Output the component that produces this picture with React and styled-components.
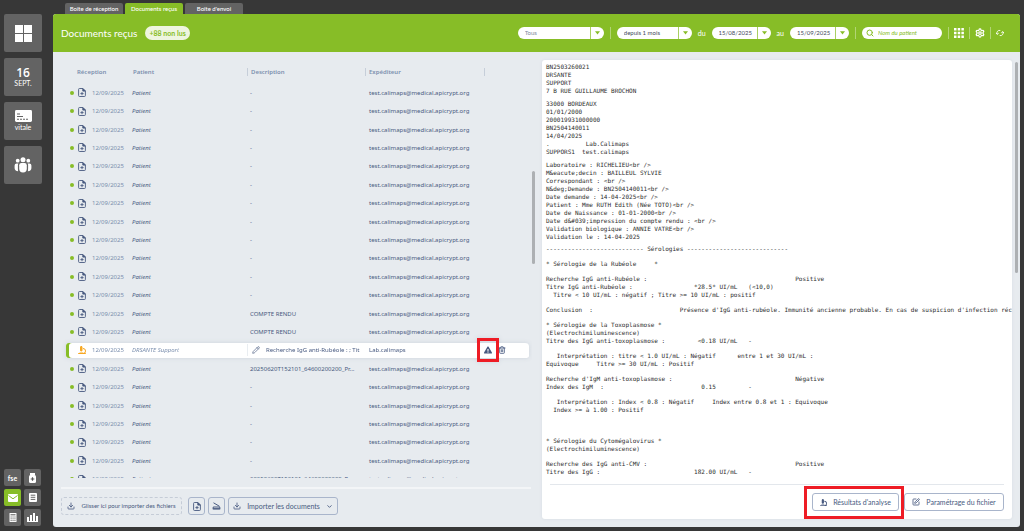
import React from "react";
import styled, { createGlobalStyle, css } from "styled-components";
import { FaMicroscope, FaExclamationTriangle } from "react-icons/fa";
import { Download, Pencil, Trash2, SquarePen, ChevronDown, Search, Settings } from "lucide-react";

const c = {
  dark: "#373737",
  tile: "#636363",
  green: "#87bd27",
  panel: "#e7ebef",
  ink: "#485a80",
  soft: "#7b8fae",
  line: "#a9b5cb",
  red: "#ee1c25",
};

const GlobalStyle = createGlobalStyle`
  *, *::before, *::after { box-sizing: border-box; }
  body { margin: 0; background: ${c.dark}; }
  body, button, input, select { font-family: Lato, "Open Sans", sans-serif; }
  button { cursor: pointer; }
  svg { display: block; flex: none; }
`;

const Page = styled.div`
  display: flex;
  height: 100vh;
  padding-right: 4px;
  overflow: hidden;
  background: ${c.dark};
`;

/* ---------- side bar ---------- */

const Sidebar = styled.nav`
  display: flex;
  flex-direction: column;
  flex: 0 0 53px;
  gap: 6px;
  padding: 14px 0 5px 4px;
`;

const Tile = styled.button`
  display: flex;
  flex-direction: column;
  align-items: center;
  justify-content: center;
  width: 38px;
  height: 38px;
  padding: 0;
  border: 0;
  border-radius: 2px;
  background: ${c.tile};
  color: #fff;
  font-size: 7px;
  line-height: 9px;
`;

const DayNumber = styled.strong`
  font-family: "Open Sans", sans-serif;
  font-size: 12px;
  line-height: 13px;
  font-weight: 600;
`;

const MiniGrid = styled.div`
  display: grid;
  grid-template-columns: repeat(2, 17px);
  gap: 3px;
  margin-top: auto;
`;

const MiniTile = styled.button`
  display: flex;
  align-items: center;
  justify-content: center;
  width: 17px;
  height: 17px;
  padding: 0;
  border: 0;
  border-radius: 2px;
  background: ${(p) => (p.$active ? c.green : c.tile)};
  color: #fff;
  font-size: 7px;
  font-weight: 700;
`;

/* ---------- main window ---------- */

const Main = styled.main`
  display: flex;
  flex-direction: column;
  flex: 1;
  min-width: 0;
  padding: 3px 0 4px;
`;

const Tabs = styled.div`
  display: flex;
  gap: 2px;
  padding-left: 12px;
`;

const Tab = styled.button`
  width: 58px;
  height: 11px;
  padding: 0;
  border: 0;
  border-radius: 2px 2px 0 0;
  background: ${(p) => (p.$active ? c.green : c.tile)};
  color: #fff;
  font-size: 6px;
  line-height: 10px;
  font-weight: 500;
  white-space: nowrap;
`;

const Window = styled.section`
  display: flex;
  flex-direction: column;
  flex: 1;
  min-height: 0;
  overflow: hidden;
  border-radius: 3px;
  background: ${c.panel};
`;

const Header = styled.header`
  display: flex;
  align-items: center;
  flex: 0 0 38px;
  padding: 0 16px 0 8px;
  background: ${c.green};
  color: #fff;
`;

const Title = styled.h1`
  margin: 0;
  font-size: 10px;
  line-height: 16px;
  font-weight: 400;
  white-space: nowrap;
`;

const Badge = styled.span`
  margin-left: 8px;
  padding: 0 4px;
  border-radius: 7px;
  background: #eef5df;
  color: ${c.green};
  font-size: 7px;
  line-height: 14px;
  font-weight: 700;
  white-space: nowrap;
`;

const Filters = styled.form`
  display: flex;
  align-items: center;
  gap: 6px;
  margin-left: auto;
`;

const Tools = styled.div`
  display: flex;
  align-items: center;
  gap: 5px;
`;

const Separator = styled.span`
  width: 1px;
  height: 12px;
  background: #b2d575;
`;

const Pill = styled.label`
  display: flex;
  align-items: center;
  width: ${(p) => p.$width};
  height: 12px;
  padding-left: ${(p) => (p.$search ? "4px" : "7px")};
  overflow: hidden;
  border-radius: 6px;
  background: #fff;
  color: ${c.green};
`;

const field = css`
  flex: 1;
  width: 100%;
  min-width: 0;
  height: 12px;
  padding: 0;
  border: 0;
  outline: 0;
  background: transparent;
  color: ${(p) => (p.$muted ? "#7d899c" : "#43495a")};
  font-size: 6px;
  line-height: 12px;
`;

const Select = styled.select`
  ${field}
  appearance: none;
`;

const DateInput = styled.input`
  ${field}
`;

const SearchInput = styled.input`
  ${field}
  padding-left: 4px;
  &::placeholder {
    color: ${c.green};
    opacity: 1;
    font-style: italic;
  }
`;

const Arrow = styled.span`
  display: flex;
  align-items: center;
  justify-content: center;
  flex: 0 0 14px;
  height: 12px;
  border-left: 1px solid #a9d062;
`;

const Word = styled.span`
  font-size: 7px;
  line-height: 12px;
`;

const IconButton = styled.button`
  display: flex;
  padding: 0;
  border: 0;
  background: none;
  color: ${(p) => p.$color || "#fff"};
`;

const Columns = styled.div`
  display: grid;
  grid-template-columns: 485fr 482fr;
  flex: 1;
  min-height: 0;
`;

/* ---------- list of documents ---------- */

const ListPane = styled.section`
  display: flex;
  flex-direction: column;
  min-width: 0;
  min-height: 0;
  padding: 8px 3px 12px 8px;
`;

const ListArea = styled.div`
  display: flex;
  flex: 1;
  min-height: 0;
`;

const TableWrap = styled.div`
  flex: 1;
  min-width: 0;
  overflow: hidden;
  padding: 0 3px 0 5px;
`;

const Rail = styled.div`
  flex: 0 0 3px;
  padding-top: ${(p) => p.$top};
`;

const Thumb = styled.div`
  width: 3px;
  height: ${(p) => p.$height};
  border-radius: 2px;
  background: #adb0b3;
`;

const Table = styled.table`
  width: 100%;
  height: 429px;
  table-layout: fixed;
  border-collapse: separate;
  border-spacing: 0;
  color: ${c.ink};
  font-family: "Noto Sans", "Open Sans", sans-serif;
  font-size: 6px;
  line-height: 12px;
`;

const Th = styled.th`
  height: 24px;
  padding: 0;
  color: ${c.soft};
  text-align: left;
  font-weight: 600;
`;

const HeadLabel = styled.span`
  display: block;
  height: 8px;
  padding-left: 3px;
  border-left: 1px solid ${(p) => (p.$bar ? "#c6ced9" : "transparent")};
  line-height: 8px;
`;

const ReceptionHead = styled(HeadLabel)`
  padding-left: 10px;
`;

const Td = styled.td`
  padding: 0 0 0 ${(p) => p.$left || "0"};
  border-style: solid;
  border-color: transparent;
  border-width: 1px 0 2px;
  overflow: hidden;
  color: ${(p) => (p.$faint ? c.soft : "inherit")};
  font-style: ${(p) => (p.$italic ? "italic" : "normal")};
  text-overflow: ellipsis;
  white-space: nowrap;
`;

const Row = styled.tr`
  ${(p) =>
    p.$selected &&
    css`
      filter: drop-shadow(0 0 2px #cdd4dd);
      ${Td} {
        background: #fff padding-box;
      }
      ${Td}:first-child {
        border-top-left-radius: 3px;
        border-bottom-left-radius: 3px;
        box-shadow: inset 3px 0 0 ${c.green};
      }
      ${Td}:last-child {
        border-top-right-radius: 4px;
        border-bottom-right-radius: 4px;
        overflow: visible;
      }
    `}
`;

const StatusCell = styled.div`
  display: flex;
  align-items: center;
  gap: 4px;
  padding-left: 4px;
`;

const Dot = styled.span`
  width: 4px;
  height: 4px;
  border-radius: 50%;
  background: ${(p) => (p.$on ? c.green : "transparent")};
`;

const EditCell = styled.div`
  display: flex;
  align-items: center;
  gap: 6px;
  padding-left: 4px;
  border-left: 1px solid #e9edf1;
`;

const RowActions = styled.div`
  display: flex;
  align-items: center;
  gap: 6px;
`;

const Marked = styled.div`
  position: relative;
  display: flex;
`;

const Mark = styled.span`
  position: absolute;
  z-index: 1;
  inset: ${(p) => p.$inset};
  border: 3px solid ${c.red};
  pointer-events: none;
`;

const ListFooter = styled.footer`
  display: flex;
  gap: 3px;
  margin: 9px 4px 0 0;
  padding-top: 8px;
  border-top: 2px solid #f3f5f7;
`;

const Button = styled.button`
  display: flex;
  align-items: center;
  justify-content: center;
  gap: 6px;
  height: 18px;
  width: ${(p) => p.$width};
  margin-right: ${(p) => (p.$dashed ? "3px" : "0")};
  padding: 0;
  border: 1px ${(p) => (p.$dashed ? "dashed #c5ccd7" : `solid ${c.line}`)};
  border-radius: 3px;
  background: transparent;
  color: ${c.ink};
  font-size: ${(p) => (p.$dashed ? "6px" : "7px")};
  line-height: 12px;
  white-space: nowrap;
`;

/* ---------- document preview ---------- */

const PreviewPane = styled.section`
  display: flex;
  gap: 3px;
  min-width: 0;
  min-height: 0;
  padding: 8px 2px 8px 4px;
`;

const Card = styled.article`
  display: flex;
  flex-direction: column;
  flex: 1;
  min-width: 0;
  border-radius: 3px;
  background: #fff;
  box-shadow: 0 0 3px #d6dce4;
`;

const Report = styled.div`
  flex: 1;
  min-height: 0;
  overflow: hidden;
  padding: 3px 0 0 4px;
`;

const Paragraph = styled.pre`
  margin: 0 0 ${(p) => p.$after} 0;
  color: #2c2c2c;
  font-family: "DejaVu Sans Mono", "Liberation Mono", monospace;
  font-size: 6px;
  line-height: 8px;
`;

const CardFooter = styled.footer`
  display: flex;
  justify-content: flex-end;
  gap: 5px;
  margin: 0 8px;
  padding: 8px 0;
  border-top: 1px solid #e3e7ec;
`;

/* ---------- drawings ---------- */

const WindowsIcon = () => (
  <svg width="17" height="17" viewBox="0 0 17 17" fill="#fff">
    <path d="M0 0h8v8H0zM9 0h8v8H9zM0 9h8v8H0zM9 9h8v8H9z" />
  </svg>
);

const CardIcon = () => (
  <svg width="17" height="13" viewBox="0 0 17 13">
    <rect width="17" height="12" rx="1.4" fill="#fff" />
    <path d="M2 4h3M2 6.5h6" stroke="#636363" strokeWidth="1.2" />
    <path d="M2 9.2h12" stroke="#636363" strokeWidth="1.1" strokeDasharray="2 1" />
  </svg>
);

const PeopleIcon = () => (
  <svg width="18" height="16" viewBox="0 0 18 16" fill="#fff">
    <circle cx="9" cy="2.8" r="2.5" />
    <circle cx="3.7" cy="3.7" r="1.9" />
    <circle cx="14.3" cy="3.7" r="1.9" />
    <path d="M5.2 8.2Q5.2 6 7.4 6h3.2q2.2 0 2.2 2.2v3.3q0 4-3.8 4t-3.8-4z" />
    <path d="M4.4 6.5H2.6Q.6 6.5.6 8.6v2.5q0 3 3.5 3.2Q3.9 12.5 3.9 11V8.2q0-1 .5-1.7zM13.6 6.5h1.8q2 0 2 2.1v2.5q0 3-3.5 3.2.2-1.8.2-3.3V8.2q0-1-.5-1.7z" />
  </svg>
);

const BottleIcon = () => (
  <svg width="9" height="10" viewBox="0 0 9 10">
    <rect x="2" width="5" height="2" fill="#fff" />
    <rect x="1" y="2" width="7" height="8" rx="1.5" fill="#fff" />
    <path d="M4.500 4.200v3.600M2.700 6h3.600" stroke="#555" strokeWidth="1.200" />
  </svg>
);

const MailIcon = () => (
  <svg width="10" height="8" viewBox="0 0 10 8">
    <rect width="10" height="8" rx="1" fill="#fff" />
    <path d="M.5 1.500 5 4.800 9.500 1.500" fill="none" stroke={c.green} strokeWidth="1" />
  </svg>
);

const SheetIcon = () => (
  <svg width="8" height="9" viewBox="0 0 8 9">
    <rect width="8" height="9" rx="1" fill="#fff" />
    <path d="M1.700 2.200h4.600M1.700 4.300h4.600M1.700 6.400h4.600" stroke="#555" strokeWidth=".9" />
  </svg>
);

const CalculatorIcon = () => (
  <svg width="8" height="9" viewBox="0 0 8 9">
    <rect x=".5" width="7" height="9" rx=".6" fill="#fff" />
    <path d="M1.500 1.800h5" stroke="#555" strokeWidth="1" />
    <path d="M1.600 4h5M1.600 5.800h5M1.600 7.600h5" stroke="#555" strokeWidth=".9" strokeDasharray="1.100 .8" />
  </svg>
);

const ChartIcon = () => (
  <svg width="11" height="9" viewBox="0 0 11 9" fill="#fff">
    <path d="M0 4h2v4H0zM3 2h2v6H3zM6 0h2v8H6zM9 3h2v5H9zM0 8h11v1H0z" />
  </svg>
);

const Caret = () => (
  <svg width="5" height="4" viewBox="0 0 5 4" fill={c.green}>
    <path d="M0 .3h5L2.500 3.600z" />
  </svg>
);

const GridIcon = () => (
  <svg width="10" height="10" viewBox="0 0 10 10" fill="#fff">
    <path d="M0 0h2.500v2.500H0zM3.700 0h2.500v2.500H3.700zM7.400 0h2.500v2.500H7.400zM0 3.700h2.500v2.500H0zM3.700 3.700h2.500v2.500H3.700zM7.400 3.700h2.500v2.500H7.400zM0 7.400h2.500v2.500H0zM3.700 7.400h2.500v2.500H3.700zM7.400 7.400h2.500v2.500H7.400z" />
  </svg>
);

const SyncIcon = () => (
  <svg width="8" height="8" viewBox="0 0 8 8" fill="none" stroke="#fff" strokeWidth=".9">
    <path d="M1.200 5.200A2.600 2.600 0 0 1 4.300 1.500M6.800 2.800A2.600 2.600 0 0 1 3.700 6.500" />
    <path d="M0 3.900l1.200 1.500 1.500-1.200M8 4.100 6.800 2.600 5.300 3.800" />
  </svg>
);

const FileAddIcon = () => (
  <svg width="8" height="9" viewBox="0 0 8 9" fill="none" stroke={c.ink} strokeWidth=".9">
    <path d="M4.900.5H1.500q-.9 0-.9.900v6.200q0 .9.900.900h5q.9 0 .9-.9V3z" />
    <path d="M4.800.6v2.500h2.500z" fill={c.ink} />
    <path d="M4 4v3.200M2.400 5.600h3.200" />
  </svg>
);

const ScannerIcon = () => (
  <svg width="9" height="8" viewBox="0 0 9 8" fill="none" stroke={c.ink} strokeWidth="1">
    <path d="M1.500.8 7.500 4.300M.7 6.900h7.600M1.200 5h6.600v1.800H1.200z" />
  </svg>
);

const AlertIcon = () => <FaExclamationTriangle size={8} />;

/* ---------- data ---------- */

const SENDER = "test.calimaps@medical.apicrypt.org";
const FILE_NAME = "20250620T152101_64600200200_Pr...";
const descriptions = { 12: "COMPTE RENDU", 13: "COMPTE RENDU", 15: FILE_NAME, 21: FILE_NAME };
const rows = Array.from({ length: 22 }, (_, i) => ({
  id: i,
  selected: i === 14,
  description: descriptions[i] || "-",
}));

const pad = (text, col) => text.padEnd(col, " ");

const report = [
  { after: "5px", lines: ["BN2503260021", "DRSANTE", "SUPPORT", "7 B RUE GUILLAUME BROCHON"] },
  {
    after: "5px",
    lines: ["33000 BORDEAUX", "01/01/2000", "200019931000000", "BN2504140011", "14/04/2025", pad(".", 11) + "Lab.Calimaps", "SUPPORS1  test.calimaps"],
  },
  {
    after: "4px",
    lines: [
      "Laboratoire : RICHELIEU<br />",
      "M&eacute;decin : BAILLEUL SYLVIE",
      "Correspondant : <br />",
      "N&deg;Demande : BN2504140011<br />",
      "Date demande : 14-04-2025<br />",
      "Patient : Mme RUTH Edith (Née TOTO)<br />",
      "Date de Naissance : 01-01-2000<br />",
      "Date d&#039;impression du compte rendu : <br />",
      "Validation biologique : ANNIE VATRE<br />",
      "Validation le : 14-04-2025",
    ],
  },
  { lines: ["-".repeat(27) + " Sérologies " + "-".repeat(28)] },
  { lines: ["* Sérologie de la Rubéole     *"] },
  {
    lines: [
      pad("Recherche IgG anti-Rubéole :", 69) + "Positive",
      pad("Titre IgG anti-Rubéole :", 41) + "*28.5* UI/mL   (<10,0)",
      "  Titre < 10 UI/mL : négatif ; Titre >= 10 UI/mL : positif",
    ],
  },
  { lines: [pad("Conclusion  :", 37) + "Présence d'IgG anti-rubéole. Immunité ancienne probable. En cas de suspicion d'infection récente"] },
  { lines: ["* Sérologie de la Toxoplasmose *", "(Electrochimiluminescence)", pad("Titre des IgG anti-toxoplasmose :", 42) + "<0.18 UI/mL   -"] },
  { lines: ["   Interprétation : titre < 1.0 UI/mL : Négatif      entre 1 et 30 UI/mL :", "Equivoque     Titre >= 30 UI/mL : Positif"] },
  { lines: [pad("Recherche d'IgM anti-toxoplasmose :", 69) + "Négative", pad("Index des IgM  :", 43) + pad("0.15", 13) + "-"] },
  { lines: ["   Interprétation : Index < 0.8 : Négatif     Index entre 0.8 et 1 : Equivoque", "  Index >= à 1.00 : Positif", " ", " "] },
  { lines: ["* Sérologie du Cytomégalovirus *", "(Electrochimiluminescence)"] },
  { lines: [pad("Recherche des IgG anti-CMV :", 69) + "Positive", pad("Titre des IgG :", 41) + "182.00 UI/mL   -"] },
];

function DocumentRow({ row }) {
  const { selected } = row;
  return (
    <Row $selected={selected}>
      <Td>
        <StatusCell>
          <Dot $on={!selected} />
          {selected ? <FaMicroscope size={8} color="#f7a823" /> : <FileAddIcon />}
        </StatusCell>
      </Td>
      <Td $faint>12/09/2025</Td>
      <Td $italic $left="3px" $faint={selected}>{selected ? "DRSANTE Support" : "Patient"}</Td>
      {selected ? (
        <Td>
          <EditCell>
            <Pencil size={8} strokeWidth={2} />
            <span>Recherche IgG anti-Rubéole : ; Tit</span>
          </EditCell>
        </Td>
      ) : (
        <Td $left="3px">{row.description}</Td>
      )}
      <Td $left="4px">{selected ? "Lab.calimaps" : SENDER}</Td>
      <Td>
        {selected && (
          <RowActions>
            <Marked>
              <IconButton type="button" $color={c.ink} aria-label="Alerte"><AlertIcon /></IconButton>
              <Mark $inset="-8px -7px" />
            </Marked>
            <IconButton type="button" $color={c.ink} aria-label="Supprimer"><Trash2 size={8} strokeWidth={2.5} /></IconButton>
          </RowActions>
        )}
      </Td>
    </Row>
  );
}

export default function App() {
  return (
    <>
      <GlobalStyle />
      <Page>
        <Sidebar>
          <Tile aria-label="Accueil"><WindowsIcon /></Tile>
          <Tile><DayNumber>16</DayNumber>SEPT.</Tile>
          <Tile><CardIcon />vitale</Tile>
          <Tile aria-label="Patients"><PeopleIcon /></Tile>
          <MiniGrid>
            <MiniTile>fse</MiniTile>
            <MiniTile aria-label="Médicaments"><BottleIcon /></MiniTile>
            <MiniTile $active aria-label="Messagerie"><MailIcon /></MiniTile>
            <MiniTile aria-label="Documents"><SheetIcon /></MiniTile>
            <MiniTile aria-label="Calculatrice"><CalculatorIcon /></MiniTile>
            <MiniTile aria-label="Statistiques"><ChartIcon /></MiniTile>
          </MiniGrid>
        </Sidebar>
        <Main>
          <Tabs>
            <Tab>Boîte de réception</Tab>
            <Tab $active>Documents reçus</Tab>
            <Tab>Boîte d'envoi</Tab>
          </Tabs>
          <Window>
            <Header>
              <Title>Documents reçus</Title>
              <Badge>+88 non lus</Badge>
              <Filters>
                <Pill $width="86px">
                  <Select $muted aria-label="Type"><option>Tous</option></Select>
                  <Arrow><Caret /></Arrow>
                </Pill>
                <Separator />
                <Pill $width="75px">
                  <Select aria-label="Période"><option>depuis 1 mois</option></Select>
                  <Arrow><Caret /></Arrow>
                </Pill>
                <Word>du</Word>
                <Pill $width="59px">
                  <DateInput aria-label="Date de début" defaultValue="15/08/2025" />
                  <Arrow><Caret /></Arrow>
                </Pill>
                <Word>au</Word>
                <Pill $width="59px">
                  <DateInput aria-label="Date de fin" defaultValue="15/09/2025" />
                  <Arrow><Caret /></Arrow>
                </Pill>
                <Separator />
                <Pill $width="80px" $search>
                  <Search size={8} strokeWidth={3} />
                  <SearchInput aria-label="Nom du patient" placeholder="Nom du patient" />
                </Pill>
                <Tools>
                  <Separator />
                  <IconButton type="button" aria-label="Grille"><GridIcon /></IconButton>
                  <Separator />
                  <IconButton type="button" aria-label="Réglages"><Settings size={10} strokeWidth={3} /></IconButton>
                  <Separator />
                  <IconButton type="button" aria-label="Actualiser"><SyncIcon /></IconButton>
                </Tools>
              </Filters>
            </Header>
            <Columns>
              <ListPane>
                <ListArea>
                  <TableWrap>
                    <Table>
                      <colgroup>
                        <col style={{ width: "26px" }} />
                        <col style={{ width: "37px" }} />
                        <col />
                        <col style={{ width: "118px" }} />
                        <col style={{ width: "119px" }} />
                        <col style={{ width: "45px" }} />
                      </colgroup>
                      <thead>
                        <tr>
                          <Th colSpan={2}><ReceptionHead>Réception</ReceptionHead></Th>
                          <Th><HeadLabel>Patient</HeadLabel></Th>
                          <Th><HeadLabel $bar>Description</HeadLabel></Th>
                          <Th><HeadLabel $bar>Expéditeur</HeadLabel></Th>
                          <Th><HeadLabel $bar /></Th>
                        </tr>
                      </thead>
                      <tbody>
                        {rows.map((row) => <DocumentRow key={row.id} row={row} />)}
                      </tbody>
                    </Table>
                  </TableWrap>
                  <Rail $top="111px"><Thumb $height="93px" /></Rail>
                </ListArea>
                <ListFooter>
                  <Button $dashed $width="121px"><Download size={8} strokeWidth={2.5} />Glisser ici pour importer des fichiers</Button>
                  <Button $width="17px" aria-label="Nouveau document"><FileAddIcon /></Button>
                  <Button $width="17px" aria-label="Numériser"><ScannerIcon /></Button>
                  <Button $width="110px"><Download size={8} strokeWidth={2.5} />Importer les documents<ChevronDown size={7} strokeWidth={3} /></Button>
                </ListFooter>
              </ListPane>
              <PreviewPane>
                <Card>
                  <Report>
                    {report.map((block, i) => (
                      <Paragraph key={i} $after={block.after || "7px"}>{block.lines.join("\n")}</Paragraph>
                    ))}
                  </Report>
                  <CardFooter>
                    <Marked>
                      <Button $width="87px"><FaMicroscope size={7} />Résultats d'analyse</Button>
                      <Mark $inset="-7px -5px -8px -8px" />
                    </Marked>
                    <Button $width="100px"><SquarePen size={8} strokeWidth={2.5} />Paramétrage du fichier</Button>
                  </CardFooter>
                </Card>
                <Rail $top="2px"><Thumb $height="211px" /></Rail>
              </PreviewPane>
            </Columns>
          </Window>
        </Main>
      </Page>
    </>
  );
}
